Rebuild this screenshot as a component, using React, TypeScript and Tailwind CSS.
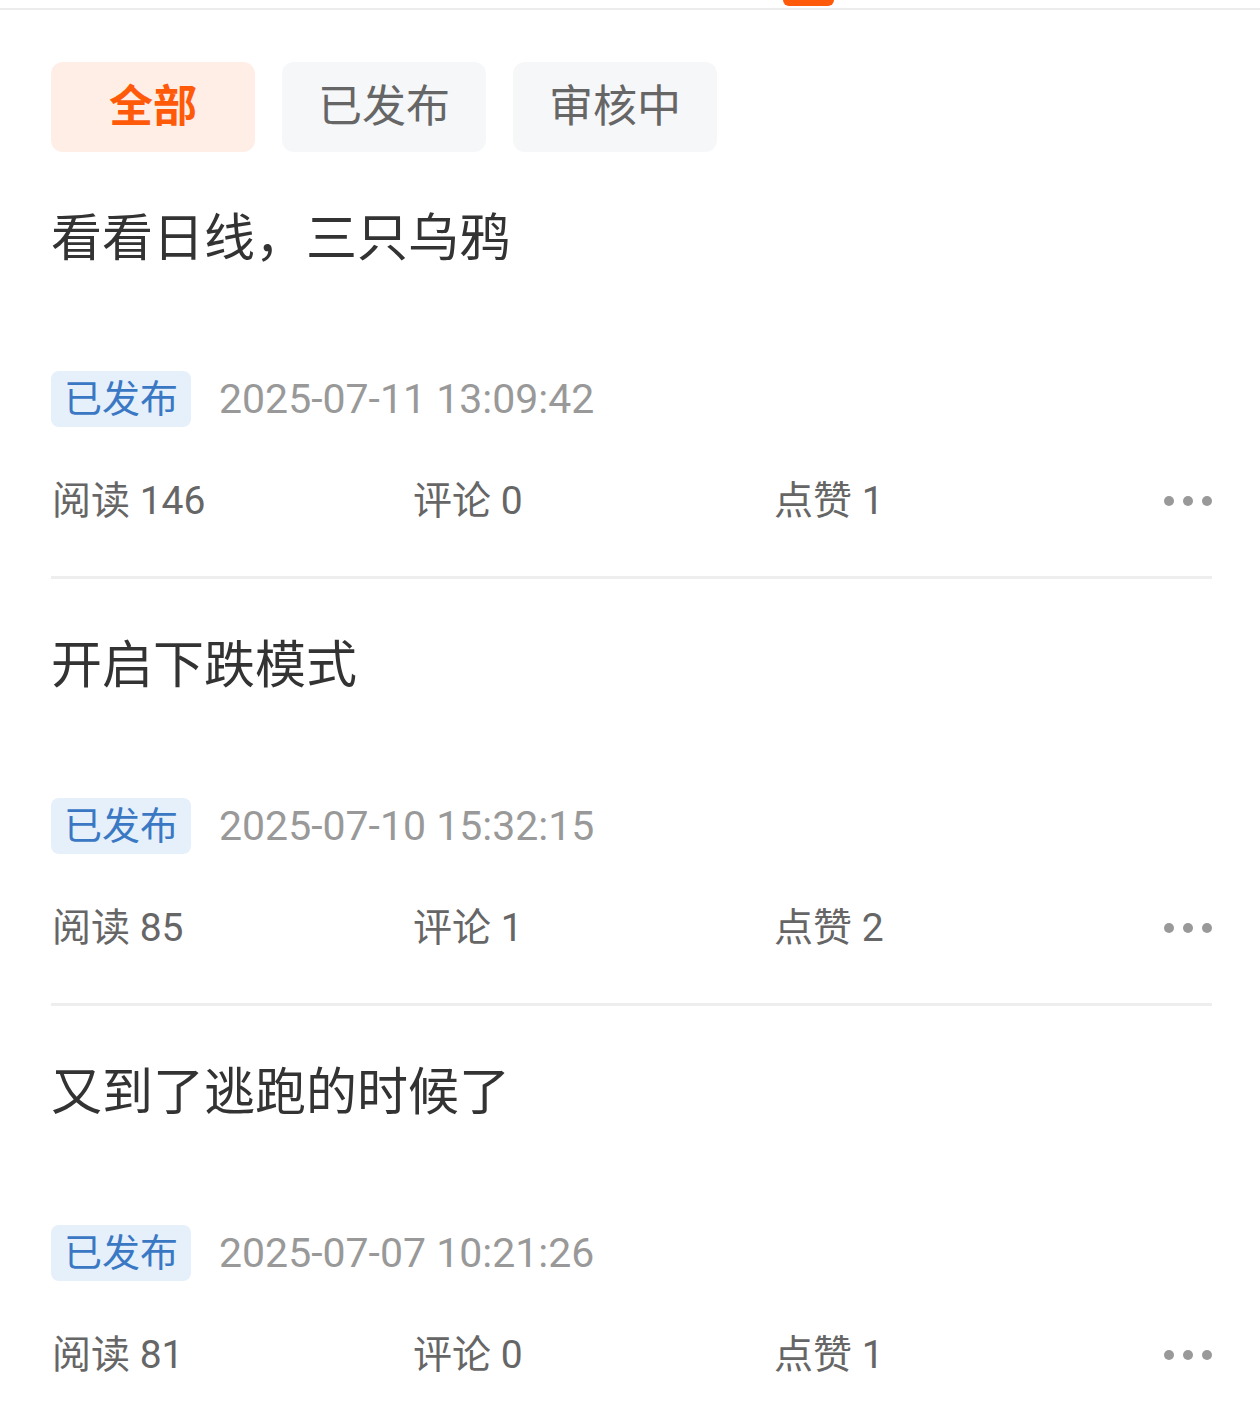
import React from "react";

const items = [
  { title: "看看日线，三只乌鸦", date: "2025-07-11 13:09:42", read: 146, comment: 0, like: 1 },
  { title: "开启下跌模式", date: "2025-07-10 15:32:15", read: 85, comment: 1, like: 2 },
  { title: "又到了逃跑的时候了", date: "2025-07-07 10:21:26", read: 81, comment: 0, like: 1 },
];

const font = { fontFamily: '"Roboto", "Noto Sans CJK SC", sans-serif' };

function Dots() {
  return (
    <div className="flex items-center gap-[9px]">
      <span className="w-[10px] h-[10px] rounded-full bg-[#999]" />
      <span className="w-[10px] h-[10px] rounded-full bg-[#999]" />
      <span className="w-[10px] h-[10px] rounded-full bg-[#999]" />
    </div>
  );
}

export default function App() {
  return (
    <div className="w-[1260px] h-[1411px] bg-white overflow-hidden" style={font}>
      <div className="relative h-[10px] border-b-[2px] border-[#ececec]">
        <div className="absolute left-[783px] top-0 w-[51px] h-[6px] rounded-b-[6px] bg-[#ff5a0a]" />
      </div>
      <div className="pl-[51px] pr-[48px]">
        <div className="flex gap-[27px] mt-[52px]">
          <div className="w-[204px] h-[90px] rounded-[12px] bg-[#ffeee5] flex items-center justify-center text-[44px] font-bold text-[#ff5a0a]">
            全部
          </div>
          <div className="w-[204px] h-[90px] rounded-[12px] bg-[#f6f7f9] flex items-center justify-center text-[44px] text-[#666]">
            已发布
          </div>
          <div className="w-[204px] h-[90px] rounded-[12px] bg-[#f6f7f9] flex items-center justify-center text-[44px] text-[#666]">
            审核中
          </div>
        </div>
        {items.map((it, i) => (
          <div key={i} className="pt-[36px]">
            <div className="h-[100px] flex items-center text-[51px] text-[#333] leading-none">{it.title}</div>
            <div className="mt-[83px] h-[56px] flex items-center">
              <div className="h-[56px] px-[13px] rounded-[8px] bg-[#e5f0fb] text-[#3a78c4] text-[38px] flex items-center">
                已发布
              </div>
              <div className="ml-[28px] text-[41px] text-[#999] leading-none">{it.date}</div>
            </div>
            <div className="mt-[46px] h-[56px] flex items-center text-[39px] text-[#666]">
              <div className="w-[361px] pl-[1px]">阅读 {it.read}</div>
              <div className="w-[361px] pl-[1px]">评论 {it.comment}</div>
              <div className="flex-1 pl-[1px]">点赞 {it.like}</div>
              <Dots />
            </div>
            <div className="mt-[47px] h-[3px] bg-[#eeeeee]" />
          </div>
        ))}
      </div>
    </div>
  );
}
